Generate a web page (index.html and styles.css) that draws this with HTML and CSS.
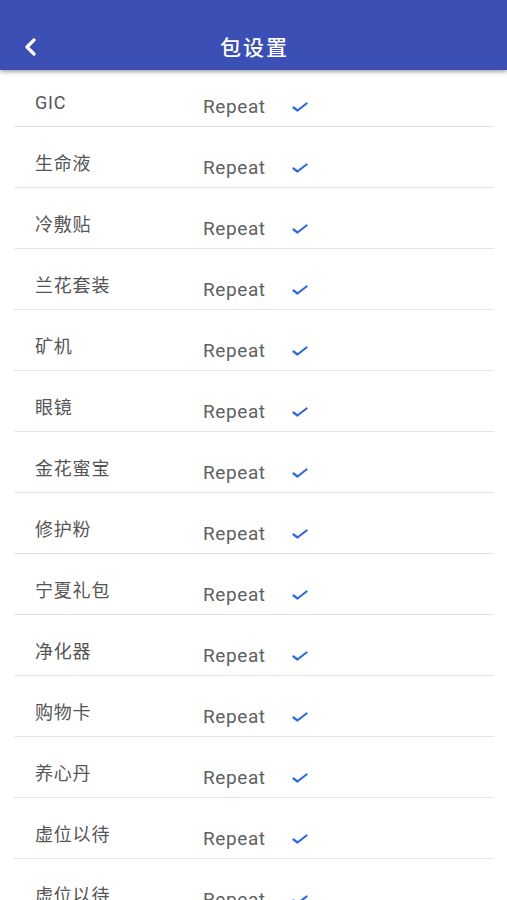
FILE: index.html
```html
<!DOCTYPE html>
<html lang="zh">
<head>
	<meta charset="UTF-8">
	<meta name="viewport" content="width=device-width, initial-scale=1.0">
	<title>包设置</title>
	<link rel="stylesheet" href="styles.css">
</head>
<body>
	<div class="header">
		<a class="back" href="#">
			<svg width="14" height="18" viewBox="0 0 14 18"><path d="M11 2 L4 9 L11 16" fill="none" stroke="#fff" stroke-width="3.2" stroke-linecap="round" stroke-linejoin="round"/></svg>
		</a>
		<h1>包设置</h1>
	</div>

	<ul class="list">
		<li><span class="name">GIC</span><span class="mode">Repeat</span><span class="check"></span></li>
		<li><span class="name">生命液</span><span class="mode">Repeat</span><span class="check"></span></li>
		<li><span class="name">冷敷贴</span><span class="mode">Repeat</span><span class="check"></span></li>
		<li><span class="name">兰花套装</span><span class="mode">Repeat</span><span class="check"></span></li>
		<li><span class="name">矿机</span><span class="mode">Repeat</span><span class="check"></span></li>
		<li><span class="name">眼镜</span><span class="mode">Repeat</span><span class="check"></span></li>
		<li><span class="name">金花蜜宝</span><span class="mode">Repeat</span><span class="check"></span></li>
		<li><span class="name">修护粉</span><span class="mode">Repeat</span><span class="check"></span></li>
		<li><span class="name">宁夏礼包</span><span class="mode">Repeat</span><span class="check"></span></li>
		<li><span class="name">净化器</span><span class="mode">Repeat</span><span class="check"></span></li>
		<li><span class="name">购物卡</span><span class="mode">Repeat</span><span class="check"></span></li>
		<li><span class="name">养心丹</span><span class="mode">Repeat</span><span class="check"></span></li>
		<li><span class="name">虚位以待</span><span class="mode">Repeat</span><span class="check"></span></li>
		<li><span class="name">虚位以待</span><span class="mode">Repeat</span><span class="check"></span></li>
	</ul>

	<script>
		// 给每一行的勾画上 svg
		var checks = document.getElementsByClassName('check');
		for (var i = 0; i < checks.length; i++) {
			checks[i].innerHTML = '<svg width="16" height="10" viewBox="0 0 16 10"><path d="M1.5 5.5 L5.5 8.5 L14.5 1.5" fill="none" stroke="#2d6ad6" stroke-width="2.2" stroke-linecap="round" stroke-linejoin="round"/></svg>';
		}
	</script>
</body>
</html>
```

FILE: styles.css
```css
* {
	padding: 0;
	margin: 0;
}
html, body {
	height: 100%;
	overflow: hidden;
}
body {
	background: #fff;
	font-family: Roboto, "Noto Sans CJK SC", sans-serif;
}

.header {
	position: relative;
	z-index: 2;
	height: 70px;
	background: #3b4fb4;
	box-shadow: 0 2px 4px rgba(0, 0, 0, 0.35);
	display: flex;
	align-items: center;
	justify-content: center;
}
.header h1 {
	color: #fff;
	font-size: 21px;
	font-weight: 500;
	letter-spacing: 2px;
	margin: 26px 0 0 2px;
	line-height: 24px;
}
.back {
	position: absolute;
	left: 23px;
	top: 38px;
	display: block;
	width: 14px;
	height: 18px;
}

ul {
	list-style: none;
}
.list {
	margin: -4px 13px 0 14px;
}
.list li {
	border-bottom: 1px solid #e4e4e4;
	display: flex;
	align-items: flex-start;
	padding: 26px 0 0 21px;
	height: 34px;
}
.list .name {
	width: 168px;
	font-size: 18px;
	line-height: 22px;
	letter-spacing: 0.8px;
	color: #555;
}
.list .mode {
	width: 89px;
	font-size: 19px;
	line-height: 22px;
	letter-spacing: 0.6px;
	margin-top: 4px;
	color: #606060;
}
.list .check {
	display: block;
	margin-top: 10px;
	line-height: 0;
}
```
